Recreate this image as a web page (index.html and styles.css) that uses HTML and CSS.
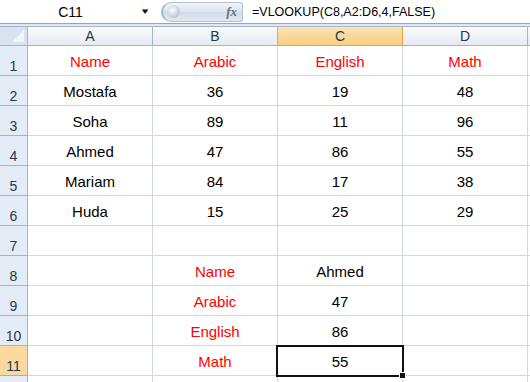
FILE: index.html
```html
<!DOCTYPE html>
<html lang="en">
<head>
    <meta charset="UTF-8">
    <title>VLOOKUP</title>
    <link rel="stylesheet" href="styles.css">
</head>
<body>

    <div class="formula-bar">
        <div class="name-box">
            <span class="cell-ref">C11</span>
            <span class="drop">&#9660;</span>
        </div>
        <div class="fx-pill">
            <span class="knob"></span>
            <span class="fx">fx</span>
        </div>
        <div class="formula">=VLOOKUP(C8,A2:D6,4,FALSE)</div>
    </div>
    <div class="strip"></div>

    <div class="sheet">
        <div class="corner"><span class="tri"></span></div>
        <div class="col-head">A</div>
        <div class="col-head">B</div>
        <div class="col-head active">C</div>
        <div class="col-head">D</div>
        <div class="col-head rest"></div>

        <div class="row-head">1</div>
        <div class="cell red">Name</div>
        <div class="cell red">Arabic</div>
        <div class="cell red">English</div>
        <div class="cell red">Math</div>
        <div class="cell rest"></div>

        <div class="row-head">2</div>
        <div class="cell">Mostafa</div>
        <div class="cell">36</div>
        <div class="cell">19</div>
        <div class="cell">48</div>
        <div class="cell rest"></div>

        <div class="row-head">3</div>
        <div class="cell">Soha</div>
        <div class="cell">89</div>
        <div class="cell">11</div>
        <div class="cell">96</div>
        <div class="cell rest"></div>

        <div class="row-head">4</div>
        <div class="cell">Ahmed</div>
        <div class="cell">47</div>
        <div class="cell">86</div>
        <div class="cell">55</div>
        <div class="cell rest"></div>

        <div class="row-head">5</div>
        <div class="cell">Mariam</div>
        <div class="cell">84</div>
        <div class="cell">17</div>
        <div class="cell">38</div>
        <div class="cell rest"></div>

        <div class="row-head">6</div>
        <div class="cell">Huda</div>
        <div class="cell">15</div>
        <div class="cell">25</div>
        <div class="cell">29</div>
        <div class="cell rest"></div>

        <div class="row-head">7</div>
        <div class="cell"></div>
        <div class="cell"></div>
        <div class="cell"></div>
        <div class="cell"></div>
        <div class="cell rest"></div>

        <div class="row-head">8</div>
        <div class="cell"></div>
        <div class="cell red">Name</div>
        <div class="cell">Ahmed</div>
        <div class="cell"></div>
        <div class="cell rest"></div>

        <div class="row-head">9</div>
        <div class="cell"></div>
        <div class="cell red">Arabic</div>
        <div class="cell">47</div>
        <div class="cell"></div>
        <div class="cell rest"></div>

        <div class="row-head">10</div>
        <div class="cell"></div>
        <div class="cell red">English</div>
        <div class="cell">86</div>
        <div class="cell"></div>
        <div class="cell rest"></div>

        <div class="row-head active">11</div>
        <div class="cell"></div>
        <div class="cell red">Math</div>
        <div class="cell selected">55</div>
        <div class="cell"></div>
        <div class="cell rest"></div>

        <div class="row-head last"></div>
        <div class="cell last"></div>
        <div class="cell last"></div>
        <div class="cell last"></div>
        <div class="cell last"></div>
        <div class="cell rest last"></div>
    </div>

</body>
</html>
```

FILE: styles.css
```css
body {
    margin: 0;
    width: 530px;
    height: 382px;
    overflow: hidden;
    background: #ffffff;
    font-family: "Liberation Sans", Arial, sans-serif;
}

/* formula bar */
.formula-bar {
    display: flex;
    align-items: center;
    height: 23px;
    background: #ffffff;
    border-bottom: 1px solid #8ea8c9;
}

.name-box {
    width: 155px;
    height: 23px;
    display: flex;
    align-items: center;
}

.cell-ref {
    flex: 1;
    text-align: center;
    font-size: 14px;
    color: #000000;
}

.drop {
    font-size: 8px;
    color: #111111;
    margin-right: 6px;
    transform: scaleX(1.4);
}

.fx-pill {
    width: 82px;
    height: 20px;
    margin-left: 6px;
    border-radius: 12px 4px 4px 12px;
    background: linear-gradient(to bottom, #f0f4fa, #dbe4f0 50%, #d0dbea 51%, #e2e9f3);
    border: 1px solid #aebfd6;
    border-left: 2px solid #9fb3cf;
    display: flex;
    align-items: center;
    justify-content: space-between;
    box-sizing: border-box;
}

.knob {
    width: 13px;
    height: 13px;
    margin-left: 4px;
    border-radius: 50%;
    background: radial-gradient(circle at 40% 40%, #ffffff, #c9cfd8 60%, #9ea8b5);
}

.fx {
    font-family: "Liberation Serif", serif;
    font-style: italic;
    font-weight: bold;
    font-size: 13px;
    color: #6b6f76;
    margin-right: 5px;
}

.formula {
    margin-left: 9px;
    font-size: 12.5px;
    color: #000000;
}

.strip {
    height: 2px;
    background: #dfe6f0;
    border-bottom: 1px solid #a2b7cf;
}

/* grid */
.sheet {
    display: grid;
    grid-template-columns: 28px 125px 125px 125px 125px 2px;
    grid-template-rows: 19px repeat(11, 30px) 6px;
}

.corner {
    background: #d7e3f3;
    border-right: 1px solid #9eb6ce;
    border-bottom: 1px solid #9eb6ce;
    position: relative;
}

.tri {
    position: absolute;
    right: 3px;
    bottom: 3px;
    width: 0;
    height: 0;
    border-left: 12px solid transparent;
    border-bottom: 12px solid #f2f5f9;
}

.col-head {
    background: linear-gradient(to bottom, #f9fafc, #e6ebf2);
    border-right: 1px solid #9eb6ce;
    border-bottom: 1px solid #9eb6ce;
    display: flex;
    align-items: center;
    justify-content: center;
    font-size: 14px;
    color: #27374b;
}

.col-head.active {
    background: linear-gradient(to bottom, #fbe3b3, #f7cf82);
    border-right-color: #f2a03c;
    border-bottom-color: #f2a03c;
}

.col-head.rest {
    border-right: none;
}

.row-head {
    background: #e4ecf7;
    border-right: 1px solid #9eb6ce;
    border-bottom: 1px solid #9eb6ce;
    display: flex;
    align-items: flex-end;
    justify-content: center;
    padding-bottom: 1px;
    font-size: 14px;
    color: #27374b;
}

.row-head.active {
    background: #f9d99f;
    border-right-color: #f2a03c;
    border-bottom-color: #f2a03c;
}

.cell {
    border-right: 1px solid #d0d7e5;
    border-bottom: 1px solid #d0d7e5;
    display: flex;
    align-items: flex-end;
    justify-content: center;
    padding-bottom: 5px;
    font-size: 15px;
    color: #000000;
}

.cell.rest {
    border-right: none;
}

.last {
    border-bottom: none;
    padding-bottom: 0;
}

.cell.red {
    color: #ff0000;
}

.cell.selected {
    position: relative;
}

.cell.selected::before {
    content: "";
    position: absolute;
    left: -2px;
    top: -1px;
    right: -2px;
    bottom: -2px;
    border: 2px solid #111111;
}

.cell.selected::after {
    content: "";
    position: absolute;
    right: -4px;
    bottom: -4px;
    width: 5px;
    height: 5px;
    background: #111111;
    border: 1px solid #ffffff;
}
```
